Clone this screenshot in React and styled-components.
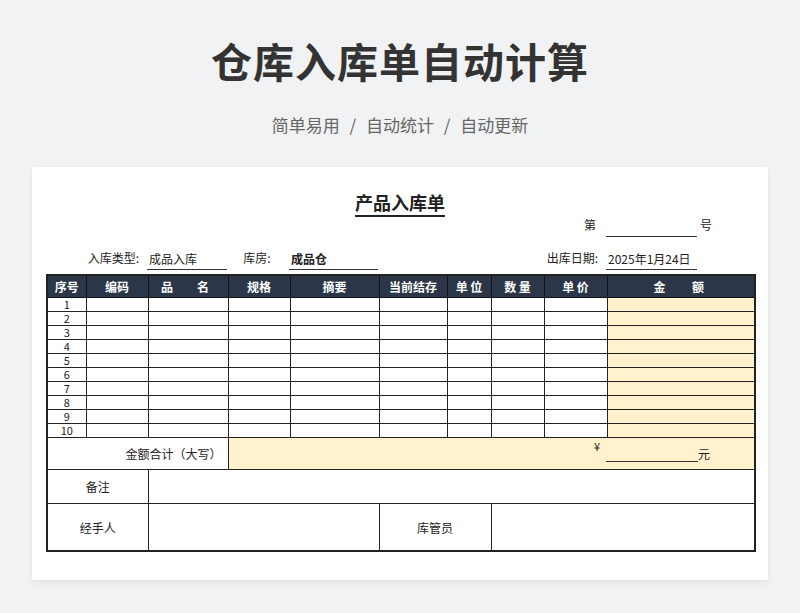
import React from "react";
import styled, { createGlobalStyle } from "styled-components";

const Global = createGlobalStyle`
  html, body { margin: 0; padding: 0; background: #f1f2f4; }
  body { font-family: "Noto Sans CJK SC", "Noto Sans", sans-serif; color: #222; }
`;

const COLS = "39px 62px 80px 62px 89px 68px 44px 53px 63px 148px";

const Page = styled.div`
  width: 800px; height: 613px; box-sizing: border-box;
  display: flex; flex-direction: column; align-items: center;
  padding-top: 30px;
`;
const Title = styled.h1`
  margin: 0; font-size: 41px; font-weight: 700; color: #333; line-height: 60px; letter-spacing: 1px;
`;
const Sub = styled.div`
  margin-top: 23px; font-size: 17px; color: #666; line-height: 24px; word-spacing: 6px;
`;
const Card = styled.div`
  margin-top: 30px; width: 736px; height: 413px; background: #fff;
  box-shadow: 0 2px 6px rgba(0,0,0,0.08);
  padding: 22px 14px 0; box-sizing: border-box;
`;
const FormTitle = styled.div`
  text-align: center; font-size: 18px; font-weight: 700; line-height: 26px;
  span { border-bottom: 2px solid #222; }
`;
const InfoGrid = styled.div`
  display: grid; grid-template-columns: ${COLS}; font-size: 12px;
  height: ${p => p.$h}px; align-items: end;
`;
const Label = styled.div`
  grid-column: ${p => p.$col}; text-align: ${p => p.$align || "right"};
  padding-right: ${p => p.$pr || 0}px; padding-bottom: 4px; line-height: 16px;
`;
const LineWrap = styled.div`
  grid-column: ${p => p.$col}; display: flex; align-items: flex-end; gap: 3px;
`;
const Line = styled.div`
  grid-column: ${p => p.$col}; border-bottom: 1px solid #333; line-height: 16px;
  padding-left: 2px; padding-bottom: 2px; width: ${p => p.$w ? p.$w + "px" : "auto"};
  height: 16px; font-weight: ${p => (p.$bold ? 700 : 400)};
`;
const Tail = styled.span`
  line-height: 16px; padding-bottom: 4px;
`;
const Table = styled.table`
  margin-top: 4px; border-collapse: collapse; width: 708px; table-layout: fixed;
  font-size: 12px; border: 2px solid #222;
  td, th { border: 1px solid #222; padding: 0; }
`;
const Head = styled.th`
  background: #2b3648; color: #fff; height: 21px; font-weight: 700; font-size: 12px;
  letter-spacing: ${p => p.$ls || 0}px; border-color: #111 !important;
`;
const Cell = styled.td`
  height: 13px; line-height: 13px; font-size: 11px; text-align: center; overflow: hidden;
  background: ${p => (p.$yellow ? "#fff2cc" : "#fff")};
`;
const BigCell = styled.td`
  height: ${p => p.$h}px; text-align: ${p => p.$align || "center"};
  padding: 0 6px !important;
  background: ${p => (p.$yellow ? "#fff2cc" : "#fff")};
`;
const Yen = styled.div`
  display: flex; justify-content: flex-end; align-items: flex-end; padding-right: 38px;
  span.y { margin-right: 6px; position: relative; top: -8px; font-size: 11px; }
  span.l { width: 92px; border-bottom: 1px solid #333; height: 14px; }
`;

const heads = [["序号"], ["编码"], ["品　名", 6], ["规格"], ["摘要"], ["当前结存"], ["单 位"], ["数 量"], ["单 价"], ["金　 额", 4]];

export default function App() {
  return (
    <Page>
      <Global />
      <Title>仓库入库单自动计算</Title>
      <Sub>简单易用 / 自动统计 / 自动更新</Sub>
      <Card>
        <FormTitle><span>产品入库单</span></FormTitle>
        <InfoGrid $h={22}>
          <Label $col="9" $pr={10}>第</Label>
          <LineWrap $col="10"><Line $w={89} /><Tail>号</Tail></LineWrap>
        </InfoGrid>
        <InfoGrid $h={33}>
          <Label $col="1 / 3" $pr={8}>入库类型:</Label>
          <Line $col="3">成品入库</Line>
          <Label $col="4" $align="left" $pr={0}>&nbsp;&nbsp;&nbsp;&nbsp;&nbsp;&nbsp;库房:</Label>
          <Line $col="5" $bold>成品仓</Line>
          <Label $col="9" $pr={8}>出库日期:</Label>
          <LineWrap $col="10"><Line $w={89}>2025年1月24日</Line></LineWrap>
        </InfoGrid>
        <Table>
          <colgroup>
            {COLS.split(" ").map((w, i) => <col key={i} style={{ width: w }} />)}
          </colgroup>
          <thead>
            <tr>{heads.map(([h, ls], i) => <Head key={i} $ls={ls}>{h}</Head>)}</tr>
          </thead>
          <tbody>
            {Array.from({ length: 10 }, (_, r) => (
              <tr key={r}>
                <Cell>{r + 1}</Cell>
                {Array.from({ length: 8 }, (_, c) => <Cell key={c} />)}
                <Cell $yellow />
              </tr>
            ))}
            <tr>
              <BigCell $h={31} colSpan={3} $align="right">金额合计（大写）</BigCell>
              <BigCell $h={31} colSpan={7} $yellow>
                <Yen><span className="y">¥</span><span className="l" /><span>元</span></Yen>
              </BigCell>
            </tr>
            <tr>
              <BigCell $h={33} colSpan={2}>备注</BigCell>
              <BigCell $h={33} colSpan={8} />
            </tr>
            <tr>
              <BigCell $h={46} colSpan={2}>经手人</BigCell>
              <BigCell $h={46} colSpan={3} />
              <BigCell $h={46} colSpan={2}>库管员</BigCell>
              <BigCell $h={46} colSpan={3} />
            </tr>
          </tbody>
        </Table>
      </Card>
    </Page>
  );
}
